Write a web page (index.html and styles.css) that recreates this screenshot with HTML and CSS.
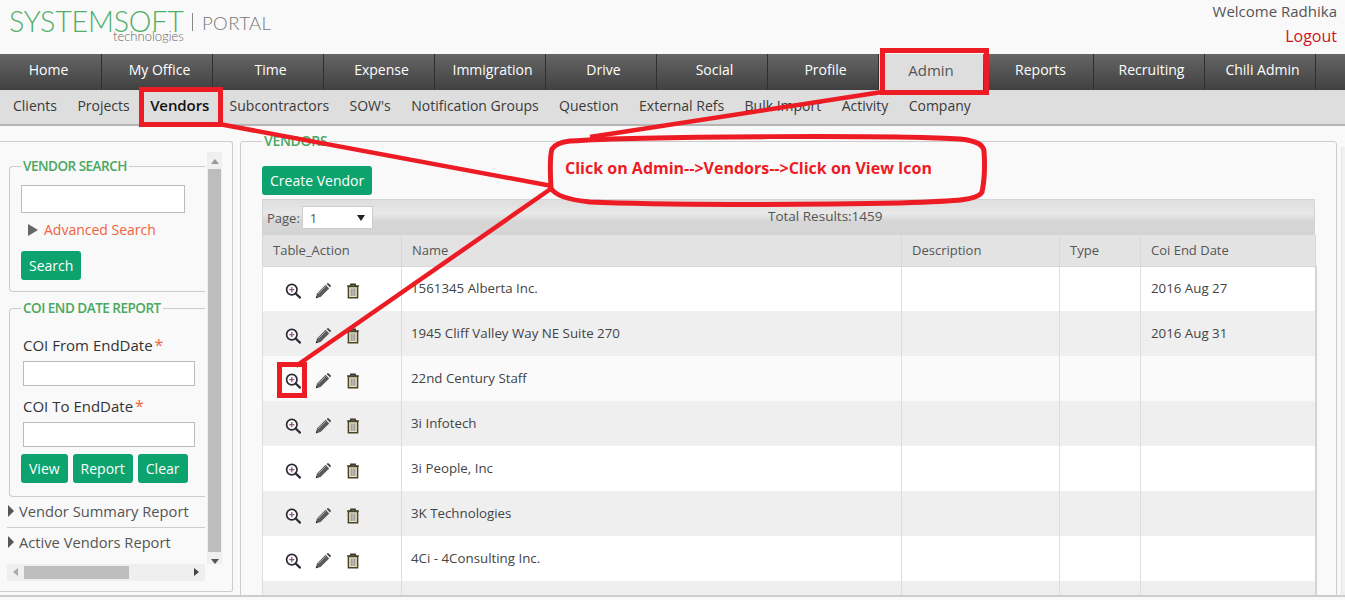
FILE: index.html
```html
<!DOCTYPE html>
<html lang="en">
<head>
<meta charset="utf-8">
<title>Vendors - Systemsoft Portal</title>
<link rel="stylesheet" href="styles.css">
</head>
<body>
<svg width="0" height="0" class="defs">
  <defs>
    <symbol id="i-zoom" viewBox="0 0 16 16">
      <circle cx="6.8" cy="6.6" r="5.2" fill="#fff" stroke="#2b2b33" stroke-width="1.7"/>
      <path d="M10.7 10.5 15 14.6" stroke="#2b2b33" stroke-width="2.2" stroke-linecap="round"/>
      <path d="M6.8 4v5.2M4.2 6.6h5.2" stroke="#8a5a80" stroke-width="1.3"/>
    </symbol>
    <symbol id="i-pencil" viewBox="0 0 16 16">
      <path d="M.8 15.2 2 10.4 10.6 1.8 14.2 5.4 5.6 14Z" fill="#5a5a5a"/>
      <path d="M11.6.9 12.5.3a1 1 0 0 1 1.2.1l1.9 1.9a1 1 0 0 1 .1 1.2l-.6.9Z" fill="#444"/>
      <path d="M3.2 10.8 10.8 3.2" stroke="#b0b0b0" stroke-width=".9"/>
      <path d="M.8 15.2 1.3 13.1 2.9 14.7Z" fill="#222"/>
    </symbol>
    <symbol id="i-trash" viewBox="0 0 16 16">
      <path d="M2.2 3h11.6M5.8 3V1.2h4.4V3" fill="none" stroke="#3a3a2e" stroke-width="1.4"/>
      <path d="M3.4 3.6h9.2v11.2H3.4Z" fill="#e9e2c6" stroke="#4a4526" stroke-width="1.5"/>
      <path d="M6.2 5.4v7.6M8 5.4v7.6M9.8 5.4v7.6" stroke="#7d8790" stroke-width="1"/>
    </symbol>
  </defs>
</svg>

<header class="top">
  <div class="brand">
    <div class="logo">
      <span class="logo-name">SYSTEMSOFT</span>
      <span class="logo-sub">technologies</span>
    </div>
    <span class="brand-portal">PORTAL</span>
  </div>
  <div class="user">
    <div class="welcome">Welcome Radhika</div>
    <a class="logout">Logout</a>
  </div>
</header>

<nav class="mainnav">
  <a class="first">Home</a><a>My Office</a><a>Time</a><a>Expense</a><a>Immigration</a><a>Drive</a><a>Social</a><a>Profile</a><a class="active">Admin</a><a>Reports</a><a>Recruiting</a><a>Chili Admin</a>
</nav>

<nav class="subnav">
  <a>Clients</a><a>Projects</a><a class="current">Vendors</a><a>Subcontractors</a><a>SOW's</a><a>Notification Groups</a><a>Question</a><a>External Refs</a><a>Bulk Import</a><a>Activity</a><a>Company</a>
</nav>

<main class="content">
  <aside class="side">
    <div class="side-view">
      <div class="side-inner">
        <fieldset class="box box-search">
          <legend>VENDOR SEARCH</legend>
          <input class="field field-search" type="text" aria-label="Vendor search">
          <div class="adv"><span class="tri"></span><a>Advanced Search</a></div>
          <button class="btn">Search</button>
        </fieldset>
        <fieldset class="box box-coi">
          <legend>COI END DATE REPORT</legend>
          <label class="lab">COI From EndDate<span class="req">*</span></label>
          <input class="field" type="text" aria-label="COI From EndDate">
          <label class="lab lab-to">COI To EndDate<span class="req">*</span></label>
          <input class="field" type="text" aria-label="COI To EndDate">
          <div class="btns"><button class="btn">View</button><button class="btn">Report</button><button class="btn">Clear</button></div>
        </fieldset>
        <div class="acc acc-first"><span class="tri-small"></span>Vendor Summary Report</div>
        <div class="acc"><span class="tri-small"></span>Active Vendors Report</div>
      </div>
      <div class="vbar"><span class="arr-up"></span><span class="vthumb"></span><span class="arr-down"></span></div>
    </div>
    <div class="hbar"><span class="arr-left"></span><span class="hthumb"></span><span class="arr-right"></span></div>
  </aside>

  <section class="panel">
    <div class="panel-legend"><span>VENDORS</span></div>
    <button class="btn btn-create">Create Vendor</button>
    <div class="grid">
      <div class="toolbar">
        <div class="pager">Page:<span class="select"><span class="sel-val">1</span><span class="sel-arrow"></span></span></div>
        <div class="total">Total Results:1459</div>
      </div>
      <table class="tbl">
        <colgroup><col class="c1"><col class="c2"><col class="c3"><col class="c4"><col class="c5"></colgroup>
        <thead><tr><th>Table_Action</th><th>Name</th><th>Description</th><th>Type</th><th>Coi End Date</th></tr></thead>
        <tbody>
          <tr><td class="acts"><svg><use href="#i-zoom"/></svg><svg><use href="#i-pencil"/></svg><svg><use href="#i-trash"/></svg></td><td>1561345 Alberta Inc.</td><td></td><td></td><td>2016 Aug 27</td></tr>
          <tr><td class="acts"><svg><use href="#i-zoom"/></svg><svg><use href="#i-pencil"/></svg><svg><use href="#i-trash"/></svg></td><td>1945 Cliff Valley Way NE Suite 270</td><td></td><td></td><td>2016 Aug 31</td></tr>
          <tr class="soft"><td class="acts"><svg><use href="#i-zoom"/></svg><svg><use href="#i-pencil"/></svg><svg><use href="#i-trash"/></svg></td><td>22nd Century Staff</td><td></td><td></td><td></td></tr>
          <tr><td class="acts"><svg><use href="#i-zoom"/></svg><svg><use href="#i-pencil"/></svg><svg><use href="#i-trash"/></svg></td><td>3i Infotech</td><td></td><td></td><td></td></tr>
          <tr><td class="acts"><svg><use href="#i-zoom"/></svg><svg><use href="#i-pencil"/></svg><svg><use href="#i-trash"/></svg></td><td>3i People, Inc</td><td></td><td></td><td></td></tr>
          <tr><td class="acts"><svg><use href="#i-zoom"/></svg><svg><use href="#i-pencil"/></svg><svg><use href="#i-trash"/></svg></td><td>3K Technologies</td><td></td><td></td><td></td></tr>
          <tr><td class="acts"><svg><use href="#i-zoom"/></svg><svg><use href="#i-pencil"/></svg><svg><use href="#i-trash"/></svg></td><td>4Ci - 4Consulting Inc.</td><td></td><td></td><td></td></tr>
          <tr><td class="acts"></td><td></td><td></td><td></td><td></td></tr>
        </tbody>
      </table>
    </div>
  </section>
</main>

<svg class="marks" width="1345" height="600" viewBox="0 0 1345 600">
  <g fill="none" stroke="#ed1c24" stroke-width="5">
    <rect x="882.5" y="50.5" width="104" height="42"/>
    <rect x="141.5" y="89.5" width="79" height="35"/>
    <rect x="279.5" y="364.5" width="25" height="31"/>
    <path d="M219 124 552 186M882 92 590 137M552 188 296 366" stroke-width="4.5"/>
    <path d="M570 141C640 136 900 135 960 139C978 141 983 145 984 151C985 165 985 178 982 192C978 200 960 201 900 203C800 205 660 205 590 202C570 200 555 196 551 188C550 170 550 155 552 149C555 144 562 142 570 141Z"/>
  </g>
</svg>
<div class="callout">Click on Admin--&gt;Vendors--&gt;Click on View Icon</div>
</body>
</html>
```

FILE: styles.css
```css
* { box-sizing: border-box; }
html, body { margin: 0; padding: 0; height: 600px; overflow: hidden; }
body {
  position: relative;
  background: #f9f9f9;
  font-family: "Open Sans", "Liberation Sans", sans-serif;
  font-size: 14px;
  color: #555;
}
.defs { position: absolute; }

.top { height: 54px; display: flex; justify-content: space-between; }
.brand { display: flex; align-items: flex-start; padding: 8px 0 0 9px; }
.logo { width: 175px; display: flex; flex-direction: column; }
.logo-name { font-family: Lato, "Open Sans", sans-serif; font-weight: 300; font-size: 28.6px; line-height: 26px; color: #4fae68; letter-spacing: -.2px; white-space: nowrap; }
.logo-sub { font-family: Lato, "Open Sans", sans-serif; font-weight: 300; font-size: 13px; line-height: 10px; color: #666; margin: -3px 0 0 104px; }
.brand-portal { margin: 5px 0 0 8px; padding-left: 9px; border-left: 1px solid #888; height: 18px; font-family: Lato, "Open Sans", sans-serif; font-weight: 300; font-size: 18.5px; line-height: 20px; color: #777; letter-spacing: .4px; }
.user { text-align: right; padding: 0 8px 0 0; }
.welcome { font-size: 15px; line-height: 22px; color: #555; }
.logout { display: block; margin-top: 3px; font-size: 16px; line-height: 22px; color: #d0121e; }

.mainnav { height: 36px; display: flex; background: linear-gradient(#666, #404040); }
.mainnav a { width: 111px; flex: none; padding-left: 5px; border-right: 1px solid #2f2f2f; text-align: center; color: #fff; line-height: 32px; }
.mainnav a.first { width: 102px; padding: 0 4px 0 0; }
.mainnav a.active { background: #dedede; color: #555; font-size: 15px; line-height: 33px; border-right: 0; width: 104px; padding: 0; }
.mainnav a.active + a { width: 111px; }

.subnav { height: 36px; display: flex; gap: 20.4px; padding-left: 13px; background: #dedede; border-bottom: 2px solid #b5b5b5; line-height: 31px; color: #444; }
.subnav a { color: #3a3a3a; white-space: nowrap; }
.subnav a.current { color: #111; font-size: 15px; font-weight: 600; letter-spacing: -.1px; }

.content { height: 471px; display: flex; align-items: flex-start; gap: 7px; padding: 15px 8px 0 0; overflow: hidden; border-bottom: 2px solid #ccc; position: relative; }
.content::after { content: ""; position: absolute; right: 0; top: 21px; bottom: 0; width: 3px; background: #f2f2f2; border-left: 1px solid #e6e6e6; }

.side { width: 233px; height: 451px; flex: none; border: 1px solid #ccc; border-left: 0; border-radius: 0 3px 3px 0; padding: 10px 10px 0 7px; }
.side-view { display: flex; height: 412px; overflow: hidden; }
.side-inner { width: 198px; flex: none; }
.box { margin: 0; border: 1px solid #ccc; border-right: 0; border-radius: 4px 0 0 4px; min-width: 0; padding: 0 0 0 11px; margin-left: 2px; }
.box legend { padding: 0 2px; font-size: 13.5px; font-weight: 600; line-height: 20px; color: #4aa860; letter-spacing: -.5px; margin-left: 0; }
.box-search { height: 136px; margin-top: 4px; padding-top: 9px; }
.box-coi { height: 199px; margin-top: 6px; padding-top: 17px; }
.field { display: block; height: 28px; background: #fff; border: 1px solid #bbb; padding: 0; }
.field-search { width: 164px; }
.box-coi .field { width: 172px; height: 25px; margin-left: 2px; margin-top: 6px; }
.adv { display: flex; align-items: center; margin: 7px 0 0 7px; line-height: 20px; color: #f0623a; }
.tri { width: 0; height: 0; border-left: 10px solid #666; border-top: 6px solid transparent; border-bottom: 6px solid transparent; margin-right: 6px; }
.btn { display: block; height: 29px; padding: 0 8px; border: 0; border-radius: 3px; background: #0ca36f; color: #fff; font: 14px/29px "Open Sans", sans-serif; }
.box-search .btn { margin-top: 11px; }
.lab { display: block; margin-left: 2px; line-height: 20px; color: #333; font-size: 15px; }
.lab-to { margin-top: 10px; }
.req { color: #f0623a; margin-left: 2px; font-size: 16px; }
.btns { display: flex; gap: 5px; margin-top: 7px; }
.acc { height: 31px; margin-left: 0; padding-left: 12px; border-bottom: 1px solid #ccc; position: relative; font-size: 14.7px; line-height: 29px; white-space: nowrap; color: #555; }
.acc + .acc { border-bottom: 0; }
.tri-small { position: absolute; left: 1px; top: 8px; width: 0; height: 0; border-left: 6px solid #555; border-top: 6px solid transparent; border-bottom: 6px solid transparent; }

.vbar { width: 15px; flex: none; background: #efefef; display: flex; flex-direction: column; align-items: center; margin-left: 2px; }
.arr-up { width: 0; border-left: 4px solid transparent; border-right: 4px solid transparent; border-bottom: 5px solid #999; margin-top: 7px; height: 0; margin-bottom: 5px; }
.vthumb { width: 13px; height: 383px; flex: none; background: #bdbdbd; }
.arr-down { width: 0; height: 0; margin-top: 7px; border-left: 4px solid transparent; border-right: 4px solid transparent; border-top: 5px solid #555; }
.hbar { width: 198px; height: 17px; margin-top: 0; background: #efefef; position: relative; }
.arr-left, .arr-right { position: absolute; top: 4px; width: 0; height: 0; border-top: 4px solid transparent; border-bottom: 4px solid transparent; }
.arr-left { left: 6px; border-right: 5px solid #aaa; }
.arr-right { right: 6px; border-left: 5px solid #444; }
.hthumb { position: absolute; left: 17px; top: 2px; width: 105px; height: 13px; background: #bdbdbd; }

.panel { flex: 1; height: 470px; border: 1px solid #ccc; border-radius: 3px; padding: 0 21px 0 21px; position: relative; }
.panel-legend { height: 24px; margin-top: -11px; }
.panel-legend span { background: #f9f9f9; padding: 0 2px; font-size: 14px; font-weight: 600; color: #4aa860; line-height: 20px; letter-spacing: -.3px; }
.btn-create { height: 29px; margin-top: 11px; padding: 0 8px; font-size: 14px; }
.grid { margin-top: 4px; width: 1053px; }
.toolbar { height: 36px; position: relative; background: linear-gradient(#dedede, #e8e8e8 40%, #d6d6d6 62%, #d4d4d4); border: 1px solid #d4d4d4; display: flex; align-items: flex-start; padding-top: 6px; }
.pager { display: flex; align-items: center; font-size: 13px; padding-left: 4px; gap: 2px; width: 505px; flex: none; }
.select { width: 71px; height: 23px; background: #fff; border: 1px solid #ccc; display: flex; justify-content: space-between; align-items: center; padding: 0 7px; }
.sel-val { color: #555; font-size: 13px; }
.sel-arrow { width: 0; height: 0; border-left: 4px solid transparent; border-right: 4px solid transparent; border-top: 6px solid #222; }
.total { font-size: 13.5px; line-height: 20px; }

.tbl { width: 1053px; table-layout: fixed; border-collapse: collapse; }
.c1 { width: 139px; } .c2 { width: 500px; } .c3 { width: 158px; } .c4 { width: 81px; } .c5 { width: 175px; }
.tbl th { height: 31px; padding: 0 0 0 10px; background: #e3e3e3; border: 1px solid #d8d8d8; border-top: 0; font-size: 13px; font-weight: 400; text-align: left; color: #555; }
.tbl td { height: 45px; padding: 0 0 2px 9px; font-size: 13.3px; color: #444; border-left: 1px solid #ddd; background: #fff; vertical-align: middle; }
.tbl td:last-child { padding-left: 10px; border-right: 2px solid #d4d4d4; }
.tbl td:first-child { border-left: 1px solid #ddd; }
.tbl tbody tr:nth-child(even) td { background: #efefef; }
.tbl tbody tr.soft td { background: #fafafa; }
.tbl td.acts { padding: 2px 0 0 22px; white-space: nowrap; }
.acts svg { width: 16px; height: 16px; margin-right: 14px; vertical-align: middle; }

.marks { position: absolute; left: 0; top: 0; pointer-events: none; }
.callout { position: absolute; left: 565px; top: 156px; font-size: 16px; font-weight: 700; line-height: 24px; color: #ed1c24; white-space: nowrap; }
```
